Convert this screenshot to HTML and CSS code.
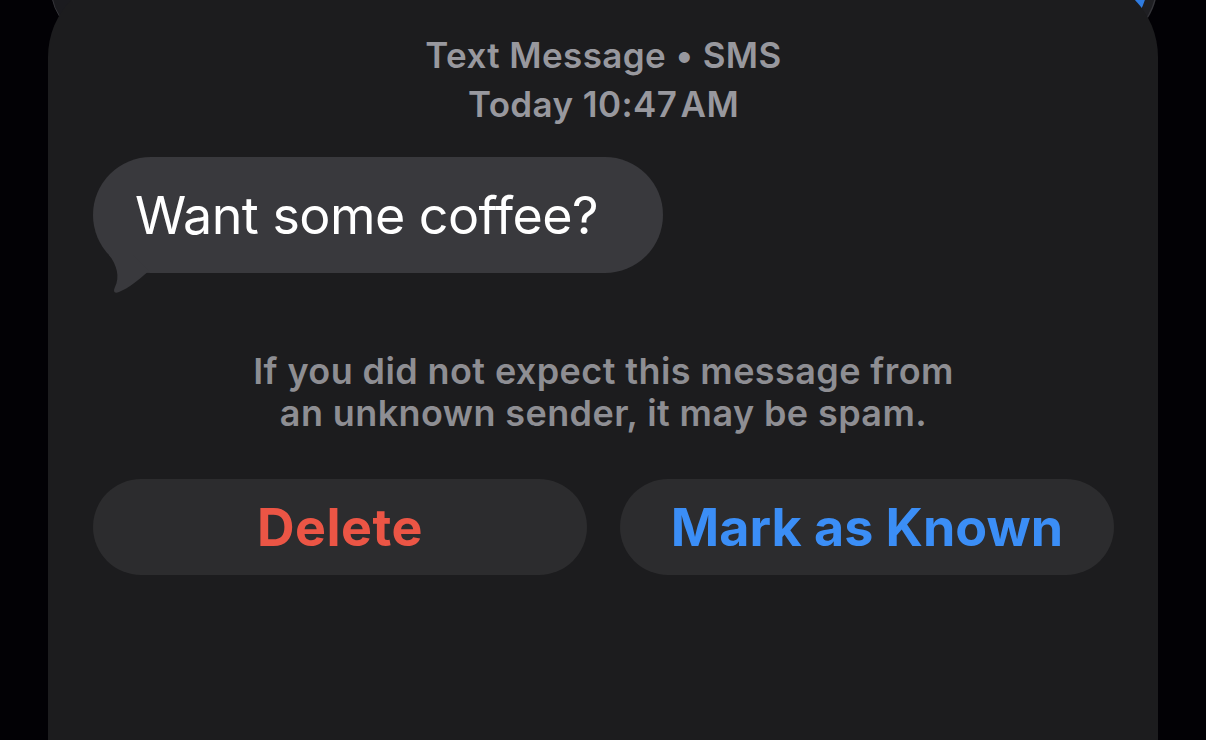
FILE: index.html
```html
<!DOCTYPE html>
<html lang="en">
<head>
<meta charset="utf-8">
<title>Text Message</title>
<link rel="stylesheet" href="styles.css">
</head>
<body>
  <div class="screen">
    <div class="avatar-left"></div>
    <div class="avatar-right"></div>
    <main class="card">
      <header class="meta">
        <div class="meta-line">Text Message • SMS</div>
        <div class="meta-line">Today 10:47&#8202;AM</div>
      </header>
      <div class="bubble-row">
        <div class="bubble">
          <svg class="tail" width="70" height="140" viewBox="0 0 70 140" aria-hidden="true">
            <path d="M 16 98 C 24 108, 27 120, 22 130 C 20 134, 21 137, 26 135 C 36 131, 44 124, 56 114 L 40 98 Z" fill="#39393d"/>
          </svg>
          <span class="bubble-text">Want some coffee?</span>
        </div>
      </div>
      <p class="warning">If you did not expect this message from<br>an unknown sender, it may be spam.</p>
      <div class="actions">
        <button class="action action-delete">Delete</button>
        <button class="action action-known">Mark as Known</button>
      </div>
    </main>
  </div>
</body>
</html>
```
FILE: styles.css
```css
* { box-sizing: border-box; }

html, body {
  margin: 0;
  padding: 0;
  background: #020105;
  height: 740px;
  overflow: hidden;
  font-family: Inter, "Noto Sans", "Liberation Sans", sans-serif;
}

.screen {
  position: relative;
  height: 740px;
  padding: 0 48px;
  overflow: hidden;
}

.avatar-left {
  position: absolute;
  left: 50px;
  top: -75px;
  width: 120px;
  height: 120px;
  border-radius: 50%;
  background: #1b1b1f;
  border: 1.5px solid #35353a;
}

.avatar-right {
  position: absolute;
  left: 1036px;
  top: -75px;
  width: 120px;
  height: 120px;
  border-radius: 50%;
  background: #2f7be0;
  border: 9px solid #1f1f23;
  box-shadow: 0 0 0 1.5px #35353a;
}

.card {
  position: relative;
  margin-top: -25px;
  height: 820px;
  background: #1c1c1e;
  border-radius: 82px 82px 0 0;
  padding: 56px 44px 0 45px;
}

.meta {
  text-align: center;
  color: #98989e;
  font-size: 35px;
  font-weight: 600;
  line-height: 49px;
  letter-spacing: 0.4px;
}

.bubble-row {
  margin-top: 28px;
  display: flex;
}

.bubble {
  position: relative;
  height: 116px;
  padding: 0 65px 0 42px;
  display: flex;
  align-items: center;
  background: #39393d;
  border-radius: 58px;
}

.tail {
  position: absolute;
  left: 0;
  top: 0;
  overflow: visible;
}

.bubble-text {
  position: relative;
  color: #ffffff;
  font-size: 52px;
  font-weight: 400;
  letter-spacing: -0.55px;
}

.warning {
  margin: 77px 0 0;
  text-align: center;
  color: #8e8e93;
  font-size: 36px;
  font-weight: 600;
  line-height: 42px;
  letter-spacing: 0.4px;
}

.actions {
  margin-top: 45px;
  display: grid;
  grid-template-columns: 1fr 1fr;
  gap: 33px;
}

.action {
  height: 96px;
  border: none;
  border-radius: 48px;
  background: #2c2c2e;
  font-family: inherit;
  font-size: 52px;
  font-weight: 700;
  letter-spacing: 0;
  cursor: pointer;
  padding: 0;
}

.action-delete { color: #eb5545; letter-spacing: 0.5px; }
.action-known { color: #3b8ef6; }
```
